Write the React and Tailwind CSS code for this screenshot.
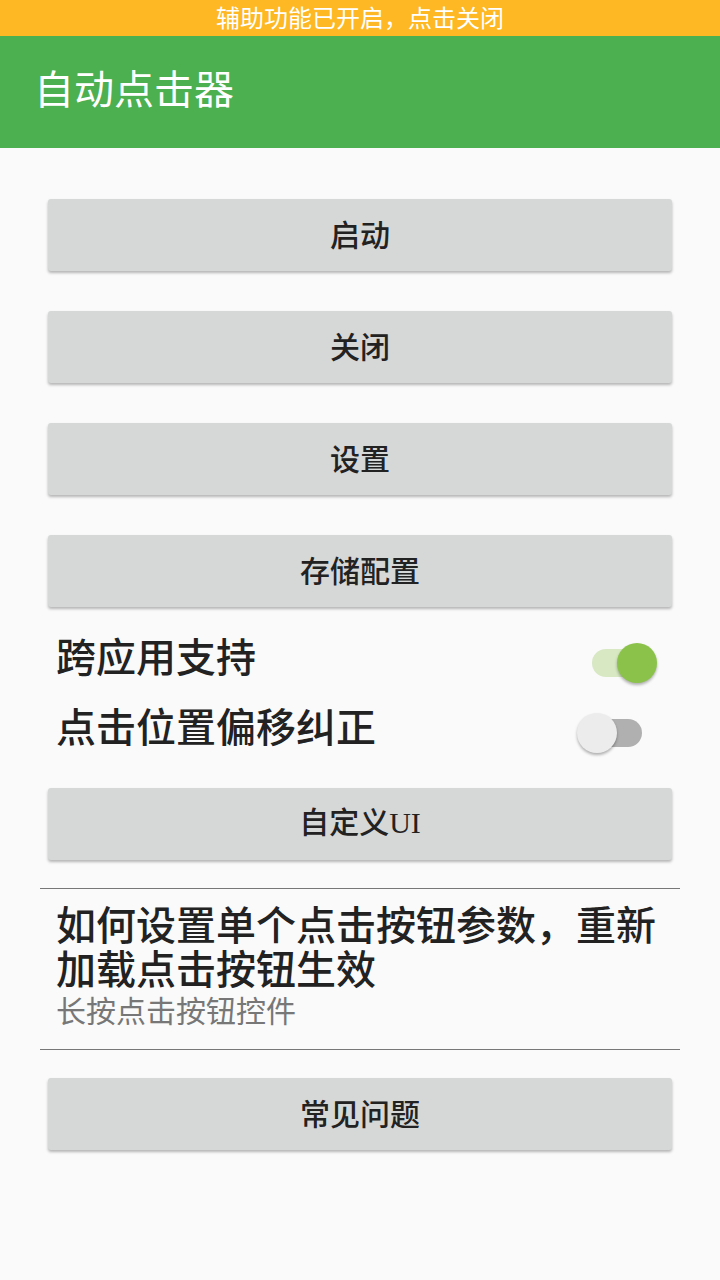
import React, { useState } from 'react';

const font = { fontFamily: '"Noto Sans CJK SC", "Noto Sans", sans-serif' };

const GrayButton = ({ children }) => (
    <button className="mx-[8px] h-[72px] rounded-[3px] bg-[#d6d7d7] pb-[5px] text-[30px] font-medium leading-none text-[#222] shadow-[0_2px_3px_rgba(0,0,0,0.28)]">
        {children}
    </button>
);

const Toggle = ({ on, onClick }) => (
    <button onClick={onClick} className="relative mt-[12px] h-[40px] w-[80px]">
        <span className={`absolute top-[6px] h-[28px] w-[56px] rounded-full ${on ? 'left-[15px] bg-[#d7e8c3]' : 'left-[9px] bg-[#b0b0b0]'}`} />
        <span className={`absolute top-0 h-[40px] w-[40px] rounded-full shadow-[0_2px_3px_rgba(0,0,0,0.3)] ${on ? 'left-[40px] bg-[#8bc34a]' : 'left-0 bg-[#ececec]'}`} />
    </button>
);

const App = () => {
    const [crossApp, setCrossApp] = useState(true);
    const [offsetFix, setOffsetFix] = useState(false);

    return (
        <div className="min-h-[1280px] bg-[#fafafa]" style={font}>
            <div className="flex h-[36px] items-center justify-center bg-[#feb823] pb-[3px] text-[24px] leading-none text-white">
                辅助功能已开启，点击关闭
            </div>
            <div className="flex h-[112px] items-center bg-[#4caf50] px-[34px] pb-[10px] text-[40px] leading-none text-white">
                自动点击器
            </div>

            <div className="flex flex-col px-[40px] pt-[51px]">
                <GrayButton>启动</GrayButton>
                <div className="h-[40px]" />
                <GrayButton>关闭</GrayButton>
                <div className="h-[40px]" />
                <GrayButton>设置</GrayButton>
                <div className="h-[40px]" />
                <GrayButton>存储配置</GrayButton>

                <div className="mt-[15px] flex h-[70px] items-center justify-between pl-[16px] pr-[23px]">
                    <span className="pb-[5px] text-[40px] font-medium leading-none text-[#222]">跨应用支持</span>
                    <Toggle on={crossApp} onClick={() => setCrossApp(!crossApp)} />
                </div>
                <div className="flex h-[70px] items-center justify-between pl-[16px] pr-[23px]">
                    <span className="pb-[5px] text-[40px] font-medium leading-none text-[#222]">点击位置偏移纠正</span>
                    <Toggle on={offsetFix} onClick={() => setOffsetFix(!offsetFix)} />
                </div>

                <div className="h-[26px]" />
                <GrayButton>
                    自定义<span style={{ fontFamily: '"Liberation Serif", serif' }}>UI</span>
                </GrayButton>

                <div className="mt-[28px] border-t border-[#777]" />
                <div className="px-[16px] pt-[12px] pb-[20px]">
                    <p className="text-[40px] font-medium leading-[44px] text-[#222]">
                        如何设置单个点击按钮参数，重新加载点击按钮生效
                    </p>
                    <p className="text-[30px] leading-[40px] text-[#777]">长按点击按钮控件</p>
                </div>
                <div className="border-t border-[#777]" />

                <div className="h-[28px]" />
                <GrayButton>常见问题</GrayButton>
            </div>
        </div>
    );
};

export default App;
